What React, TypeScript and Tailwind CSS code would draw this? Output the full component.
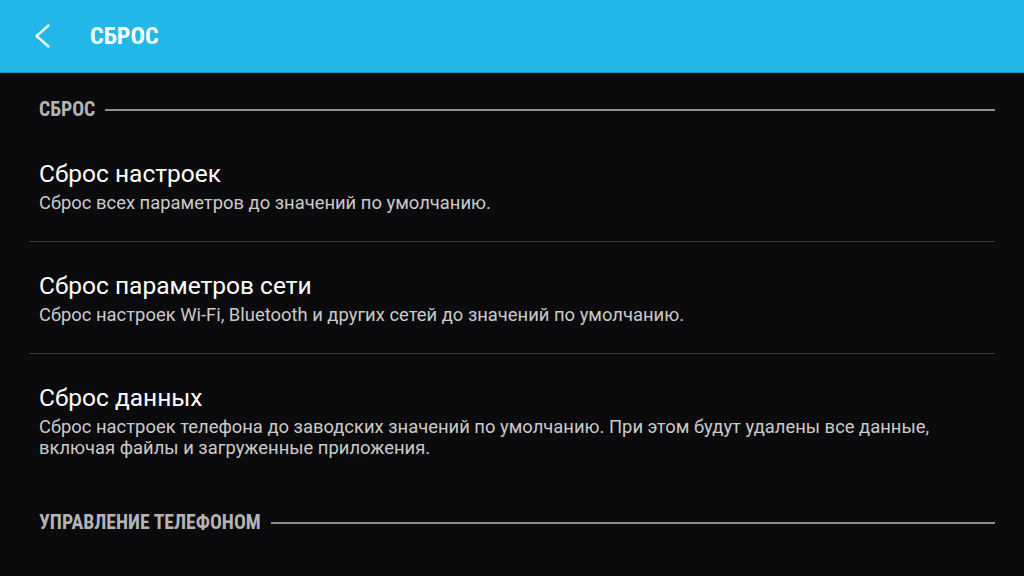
import React from "react";

const items = [
  {
    title: "Сброс настроек",
    sub: ["Сброс всех параметров до значений по умолчанию."],
  },
  {
    title: "Сброс параметров сети",
    sub: ["Сброс настроек Wi-Fi, Bluetooth и других сетей до значений по умолчанию."],
  },
  {
    title: "Сброс данных",
    sub: [
      "Сброс настроек телефона до заводских значений по умолчанию. При этом будут удалены все данные,",
      "включая файлы и загруженные приложения.",
    ],
  },
];

const condensed = { fontFamily: "'Roboto Condensed', 'DejaVu Sans Condensed', sans-serif" };

function SectionHeader({ label }: { label: string }) {
  return (
    <div className="flex items-center h-[32px] pl-[10px]">
      <span
        className="font-bold text-[19.7px] leading-none text-[#b4b4b4] whitespace-nowrap"
        style={condensed}
      >
        {label}
      </span>
      <div className="flex-1 h-[2px] bg-[#8e8e8e] ml-[10px]" />
    </div>
  );
}

export default function App() {
  return (
    <div
      className="w-[1024px] h-[576px] bg-[#0b0a0d] overflow-hidden flex flex-col"
      style={{ fontFamily: "Roboto, 'Noto Sans', sans-serif" }}
    >
      <div className="h-[73px] shrink-0 bg-[#23b6e8] border-b border-[#1c8fb8] flex items-center">
        <svg width="20" height="28" viewBox="0 0 20 28" className="ml-[32px]">
          <path d="M16.5 3.5 L4.5 14 L16.5 24.5" fill="none" stroke="#e8f7fd" strokeWidth="2.4" strokeLinecap="round" strokeLinejoin="round" />
        </svg>
        <span className="ml-[38px] font-bold text-[24px] text-white leading-none" style={condensed}>
          СБРОС
        </span>
      </div>
      <div className="px-[29px] flex flex-col">
        <div className="mt-[21px]">
          <SectionHeader label="СБРОС" />
        </div>
        {items.map((it, i) => (
          <div
            key={i}
            className={`pl-[10px] pb-[28px] ${i === 0 ? "pt-[34px]" : "pt-[30px]"} ${
              i < items.length - 1 ? "border-b border-[#3a3a3c]" : ""
            }`}
          >
            <div className="text-[24.5px] leading-[28px] text-white">{it.title}</div>
            <div className="mt-[4px] text-[18.4px] leading-[21px] text-[#cbcbcb]">
              {it.sub.map((s, j) => (
                <div key={j}>{s}</div>
              ))}
            </div>
          </div>
        ))}
        <div className="mt-[21px]">
          <SectionHeader label="УПРАВЛЕНИЕ ТЕЛЕФОНОМ" />
        </div>
      </div>
    </div>
  );
}
